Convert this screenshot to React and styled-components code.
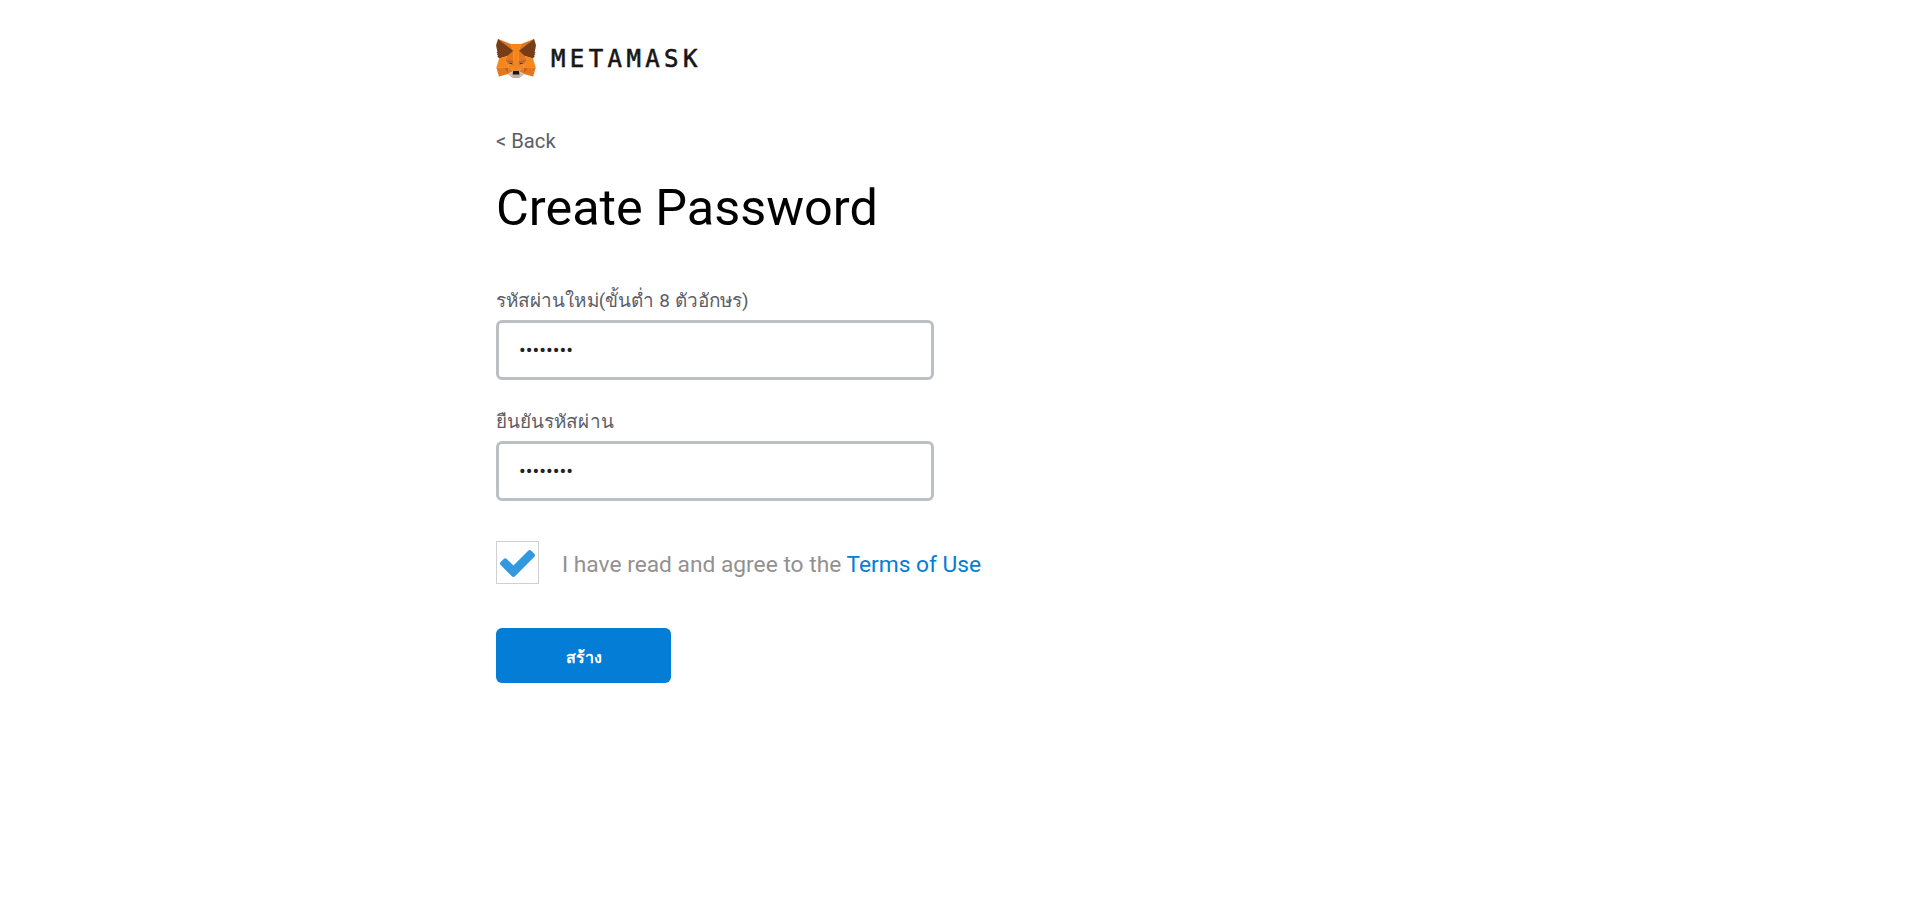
import React from "react";
import styled, { createGlobalStyle } from "styled-components";

const Global = createGlobalStyle`
  html, body { margin: 0; padding: 0; background: #fff; }
  body { font-family: Roboto, "Noto Sans", sans-serif; }
`;

const Page = styled.div`
  width: 928px;
  margin: 0 auto;
  min-height: 902px;
  display: flex;
  flex-direction: column;
`;

const Logo = styled.div`
  display: flex;
  align-items: center;
  height: 40px;
  margin-top: 38px;
  gap: 15px;
`;

const Wordmark = styled.span`
  font-family: "DejaVu Sans Mono", monospace;
  font-weight: 400;
  font-size: 24px;
  line-height: 40px;
  letter-spacing: 4.4px;
  padding-top: 2px;
  color: #161616;
  -webkit-text-stroke: 0.6px #161616;
`;

const BackLink = styled.a`
  margin-top: 51px;
  font-size: 20.2px;
  line-height: 24px;
  color: #5b5d67;
`;

const Title = styled.h1`
  margin: 25px 0 0;
  font-size: 50.4px;
  font-weight: 400;
  line-height: 60px;
  color: #000;
`;

const Form = styled.form`
  display: flex;
  flex-direction: column;
  margin-top: 50px;
`;

const Field = styled.div`
  display: flex;
  flex-direction: column;
  gap: 7px;
  margin-bottom: 29px;
`;

const Label = styled.label`
  font-size: 18.9px;
  line-height: 25px;
  letter-spacing: 0.07px;
  color: #5b5d67;
`;

const Input = styled.input`
  box-sizing: border-box;
  width: 438px;
  height: 60px;
  padding: 0 20px;
  border: 3px solid #bbc0c5;
  border-radius: 6px;
  background: #fff;
  color: #222;
  font-family: Roboto, sans-serif;
  font-size: 20px;
  outline: none;
`;

const TermsRow = styled.div`
  display: flex;
  align-items: center;
  gap: 23px;
  margin-top: 11px;
`;

const Checkbox = styled.div`
  box-sizing: border-box;
  width: 43px;
  height: 43px;
  padding-top: 1px;
  border: 1px solid #d0d0d0;
  flex: none;
  display: flex;
  align-items: center;
  justify-content: center;
`;

const TermsText = styled.span`
  font-size: 22.75px;
  line-height: 28px;
  padding-top: 4px;
  color: #939090;
`;

const TermsLink = styled.a`
  color: #037dd6;
`;

const SubmitButton = styled.button`
  box-sizing: border-box;
  width: 175px;
  height: 55px;
  margin-top: 44px;
  padding: 3px 0 0;
  border: none;
  border-radius: 6px;
  background: #037dd6;
  color: #fff;
  font-family: Roboto, sans-serif;
  font-size: 16px;
  font-weight: 700;
`;

const fox = [
  ["#E2761B", "274.1,35.5 174.6,109.4 193,65.8"],
  ["#E4761B", "44.4,35.5 143.1,110.1 125.6,65.8"],
  ["#E4761B", "238.3,206.8 211.8,247.4 268.5,263 284.8,207.7"],
  ["#E4761B", "33.9,207.7 50.1,263 106.8,247.4 80.3,206.8"],
  ["#E4761B", "103.6,138.2 87.8,162.1 144.1,164.6 142.1,104.1"],
  ["#E4761B", "214.9,138.2 175.9,103.4 174.6,164.6 230.8,162.1"],
  ["#E4761B", "106.8,247.4 140.6,230.9 111.4,208.1"],
  ["#E4761B", "177.9,230.9 211.8,247.4 207.1,208.1"],
  ["#D7C1B3", "211.8,247.4 177.9,230.9 180.6,253 180.3,262.3"],
  ["#D7C1B3", "106.8,247.4 138.3,262.3 138.1,253 140.6,230.9"],
  ["#233447", "138.8,193.5 110.6,185.2 130.5,176.1"],
  ["#233447", "179.7,193.5 188,176.1 208,185.2"],
  ["#CD6116", "106.8,247.4 111.6,206.8 80.3,207.7"],
  ["#CD6116", "207,206.8 211.8,247.4 238.3,207.7"],
  ["#CD6116", "230.8,162.1 174.6,164.6 179.8,193.5 188.1,176.1 208.1,185.2"],
  ["#CD6116", "110.6,185.2 130.6,176.1 138.8,193.5 144.1,164.6 87.8,162.1"],
  ["#E4751F", "87.8,162.1 111.4,208.1 110.6,185.2"],
  ["#E4751F", "208.1,185.2 207.1,208.1 230.8,162.1"],
  ["#E4751F", "144.1,164.6 138.8,193.5 145.4,227.6 146.9,182.7"],
  ["#E4751F", "174.6,164.6 171.9,182.6 173.1,227.6 179.8,193.5"],
  ["#F6851B", "179.8,193.5 173.1,227.6 177.9,230.9 207.1,208.1 208.1,185.2"],
  ["#F6851B", "110.6,185.2 111.4,208.1 140.6,230.9 145.4,227.6 138.8,193.5"],
  ["#C0AD9E", "180.3,262.3 180.6,253 178.1,250.8 140.4,250.8 138.1,253 138.3,262.3 106.8,247.4 117.8,256.4 140.1,271.9 178.4,271.9 200.8,256.4 211.8,247.4"],
  ["#161616", "177.9,230.9 173.1,227.6 145.4,227.6 140.6,230.9 138.1,253 140.4,250.8 178.1,250.8 180.6,253"],
  ["#763D16", "278.3,114.2 286.8,73.4 274.1,35.5 177.9,106.9 214.9,138.2 267.2,153.5 278.8,140 273.8,136.4 281.8,129.1 275.6,124.3 283.6,118.2"],
  ["#763D16", "31.8,73.4 40.3,114.2 35.2,118 43.2,124.1 37.1,129.1 45.1,136.4 40.1,140 51.6,153.5 103.9,138.2 140.9,106.9 44.4,35.5"],
  ["#F6851B", "267.2,153.5 214.9,138.2 230.8,162.1 207.1,208.1 238.3,207.7 284.8,207.7"],
  ["#F6851B", "103.6,138.2 51.6,153.5 34.2,207.7 80.3,207.7 111.4,208.1 87.8,162.1"],
  ["#F6851B", "174.6,164.6 177.9,106.9 193,65.8 125.6,65.8 140.9,106.9 144.1,164.6 145.4,227.6 173.1,227.6"],
];

const FoxIcon = () => (
  <svg width="40" height="39" viewBox="31 35 256 237" preserveAspectRatio="none">
    {fox.map(([fill, points], i) => (
      <polygon key={i} fill={fill} stroke={fill} strokeWidth="1" points={points} />
    ))}
  </svg>
);

const CheckIcon = () => (
  <svg width="35" height="27" viewBox="53 -798 1550 1188">
    <path
      transform="scale(1,-1)"
      fill="#3498DE"
      d="M1603 566q0 40-28 68l-136 136q-28 28-68 28t-68-28l-656-657-294 295q-28 28-68 28t-68-28l-136-136q-28-28-28-68t28-68l362-362 136-136q28-28 68-28t68 28l136 136 724 724q28 28 28 68z"
    />
  </svg>
);

export default function App() {
  return (
    <Page>
      <Global />
      <Logo>
        <FoxIcon />
        <Wordmark>METAMASK</Wordmark>
      </Logo>
      <BackLink>{"< Back"}</BackLink>
      <Title>Create Password</Title>
      <Form>
        <Field>
          <Label>รหัสผ่านใหม่(ขั้นต่ำ 8 ตัวอักษร)</Label>
          <Input type="password" defaultValue="12345678" />
        </Field>
        <Field>
          <Label>ยืนยันรหัสผ่าน</Label>
          <Input type="password" defaultValue="12345678" />
        </Field>
        <TermsRow>
          <Checkbox>
            <CheckIcon />
          </Checkbox>
          <TermsText>
            I have read and agree to the <TermsLink>Terms of Use</TermsLink>
          </TermsText>
        </TermsRow>
        <SubmitButton type="button">สร้าง</SubmitButton>
      </Form>
    </Page>
  );
}
